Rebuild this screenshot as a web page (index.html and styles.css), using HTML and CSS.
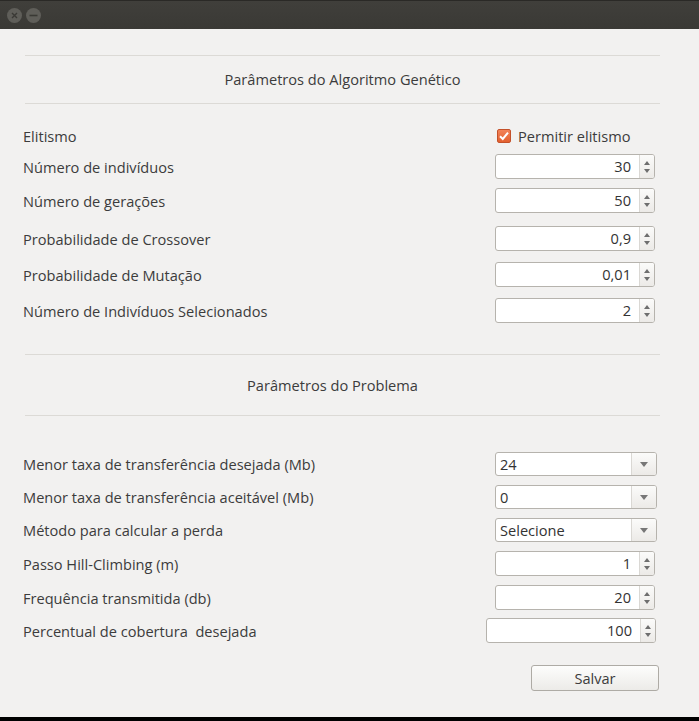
FILE: index.html
```html
<!DOCTYPE html>
<html>
<head>
<meta charset="utf-8">
<link rel="stylesheet" href="styles.css">
</head>
<body>
<div class="window">
  <div class="titlebar">
    <span class="wbtn"><svg width="15" height="15" viewBox="0 0 15 15"><circle cx="7.5" cy="7.5" r="7.5" fill="#5f5e59"/><path d="M5 5L10 10M10 5L5 10" stroke="#3a3935" stroke-width="1.4"/></svg></span>
    <span class="wbtn"><svg width="15" height="15" viewBox="0 0 15 15"><circle cx="7.5" cy="7.5" r="7.5" fill="#5f5e59"/><path d="M3.5 7.5H11.5" stroke="#3a3935" stroke-width="1.6"/></svg></span>
  </div>
  <div class="content">
    <div class="section-head first">
      <div class="rule"></div>
      <div class="section-title t1">Parâmetros do Algoritmo Genético</div>
      <div class="rule"></div>
    </div>
    <div class="group g1">
      <div class="row r-elit">
        <span class="label">Elitismo</span>
        <label class="check"><span class="box"><svg width="14" height="14" viewBox="0 0 14 14"><path d="M3 7.2L5.8 10L11 3.6" fill="none" stroke="#fff" stroke-width="2"/></svg></span>Permitir elitismo</label>
      </div>
      <div class="row r2">
        <span class="label">Número de indivíduos</span>
        <div class="spin"><span class="val">30</span><span class="arrows"><i class="up"></i><i class="down"></i></span></div>
      </div>
      <div class="row r3">
        <span class="label">Número de gerações</span>
        <div class="spin"><span class="val">50</span><span class="arrows"><i class="up"></i><i class="down"></i></span></div>
      </div>
      <div class="row r4">
        <span class="label">Probabilidade de Crossover</span>
        <div class="spin"><span class="val">0,9</span><span class="arrows"><i class="up"></i><i class="down"></i></span></div>
      </div>
      <div class="row r5">
        <span class="label">Probabilidade de Mutação</span>
        <div class="spin"><span class="val">0,01</span><span class="arrows"><i class="up"></i><i class="down"></i></span></div>
      </div>
      <div class="row r5">
        <span class="label">Número de Indivíduos Selecionados</span>
        <div class="spin"><span class="val">2</span><span class="arrows"><i class="up"></i><i class="down"></i></span></div>
      </div>
    </div>
    <div class="section-head second">
      <div class="rule"></div>
      <div class="section-title t2">Parâmetros do Problema</div>
      <div class="rule"></div>
    </div>
    <div class="group g2">
      <div class="row c1">
        <span class="label">Menor taxa de transferência desejada (Mb)</span>
        <div class="combo"><span class="cval">24</span><span class="drop"><i class="down"></i></span></div>
      </div>
      <div class="row c2">
        <span class="label">Menor taxa de transferência aceitável (Mb)</span>
        <div class="combo"><span class="cval">0</span><span class="drop"><i class="down"></i></span></div>
      </div>
      <div class="row c2">
        <span class="label">Método para calcular a perda</span>
        <div class="combo"><span class="cval">Selecione</span><span class="drop"><i class="down"></i></span></div>
      </div>
      <div class="row s1">
        <span class="label">Passo Hill-Climbing (m)</span>
        <div class="spin"><span class="val">1</span><span class="arrows"><i class="up"></i><i class="down"></i></span></div>
      </div>
      <div class="row s1">
        <span class="label">Frequência transmitida (db)</span>
        <div class="spin"><span class="val">20</span><span class="arrows"><i class="up"></i><i class="down"></i></span></div>
      </div>
      <div class="row s2">
        <span class="label">Percentual de cobertura&nbsp; desejada</span>
        <div class="spin wide"><span class="val">100</span><span class="arrows"><i class="up"></i><i class="down"></i></span></div>
      </div>
    </div>
    <div class="actions">
      <button class="btn">Salvar</button>
    </div>
  </div>
  <div class="bottombar"></div>
</div>
</body>
</html>
```

FILE: styles.css
```css
* { box-sizing: border-box; }
html, body { margin: 0; padding: 0; }
body {
  width: 699px;
  height: 721px;
  overflow: hidden;
  background: #f2f1f0;
  font-family: "Open Sans", "DejaVu Sans", sans-serif;
  font-size: 14.6px;
  color: #3c3c3c;
}
.window {
  width: 699px;
  height: 721px;
  display: flex;
  flex-direction: column;
}
.titlebar {
  height: 29px;
  flex: none;
  background: linear-gradient(#403f3b, #3a3935);
  border-top: 1px solid #2a2926;
  display: flex;
  align-items: center;
  gap: 4px;
  padding-left: 7px;
}
.wbtn { display: flex; width: 15px; height: 15px; }
.content {
  flex: 1;
  padding: 0 44px 0 23px;
  display: flex;
  flex-direction: column;
}
.section-head {
  margin-left: 2px;
  margin-right: -5px;
  display: flex;
  flex-direction: column;
}
.section-head.first { margin-top: 26px; }
.section-head.second { margin-top: 31px; }
.rule { height: 1px; background: #dcdad6; }
.section-title { text-align: center; }
.t1 { height: 47px; line-height: 47px; }
.t2 { height: 60px; line-height: 60px; padding-right: 20px; }
.group { display: flex; flex-direction: column; }
.g1 { margin-top: 19px; }
.g2 { margin-top: 36px; }
.row {
  height: 25px;
  display: flex;
  align-items: center;
  justify-content: space-between;
}
.r2 { margin-top: 6px; }
.r3 { margin-top: 9px; }
.r4 { margin-top: 13px; }
.r5 { margin-top: 11px; }
.c1 { height: 24px; }
.c2 { height: 24px; margin-top: 9px; }
.s1 { margin-top: 9px; }
.s2 { margin-top: 8px; }
.label { white-space: nowrap; }
.check {
  width: 158px;
  display: flex;
  align-items: center;
  gap: 7px;
}
.box {
  width: 14px;
  height: 14px;
  border-radius: 2px;
  background: linear-gradient(#f2845a, #e3602f);
  border: 1px solid #c4512a;
  display: flex;
  align-items: center;
  justify-content: center;
}
.box svg { margin: -1px; }
.spin {
  width: 160px;
  height: 25px;
  display: flex;
  border: 1px solid #b6b3ad;
  border-radius: 3px;
  background: #fff;
}
.spin.wide { width: 170px; margin-right: -1px; }
.val {
  flex: 1;
  text-align: right;
  padding-right: 8px;
  line-height: 23px;
  color: #333;
}
.arrows {
  width: 15px;
  border-left: 1px solid #dad8d4;
  background: linear-gradient(#fbfbfa, #eceae7);
  border-radius: 0 2px 2px 0;
  display: flex;
  flex-direction: column;
  align-items: center;
  justify-content: center;
  gap: 4px;
}
i { display: block; width: 0; height: 0; }
i.up {
  border-left: 3px solid transparent;
  border-right: 3px solid transparent;
  border-bottom: 4px solid #6e6e6e;
}
i.down {
  border-left: 3px solid transparent;
  border-right: 3px solid transparent;
  border-top: 4px solid #6e6e6e;
}
.combo {
  width: 162px;
  height: 24px;
  display: flex;
  border: 1px solid #b6b3ad;
  border-radius: 3px;
  background: #fff;
  margin-right: -2px;
}
.cval { flex: 1; padding-left: 4px; line-height: 22px; color: #333; }
.drop {
  width: 25px;
  border-left: 1px solid #dad8d4;
  background: linear-gradient(#fbfbfa, #eceae7);
  border-radius: 0 2px 2px 0;
  display: flex;
  align-items: center;
  justify-content: center;
}
.drop i.down {
  border-left: 4px solid transparent;
  border-right: 4px solid transparent;
  border-top: 5px solid #777;
}
.actions {
  display: flex;
  justify-content: flex-end;
  margin-top: 22px;
  margin-right: -4px;
}
.btn {
  width: 128px;
  height: 26px;
  font-family: inherit;
  font-size: 14.6px;
  color: #3c3c3c;
  border: 1px solid #aeaba5;
  border-radius: 3px;
  background: linear-gradient(#fdfdfc, #ecebe8);
  padding: 0;
}
.bottombar { height: 4px; flex: none; background: #000; }
```
